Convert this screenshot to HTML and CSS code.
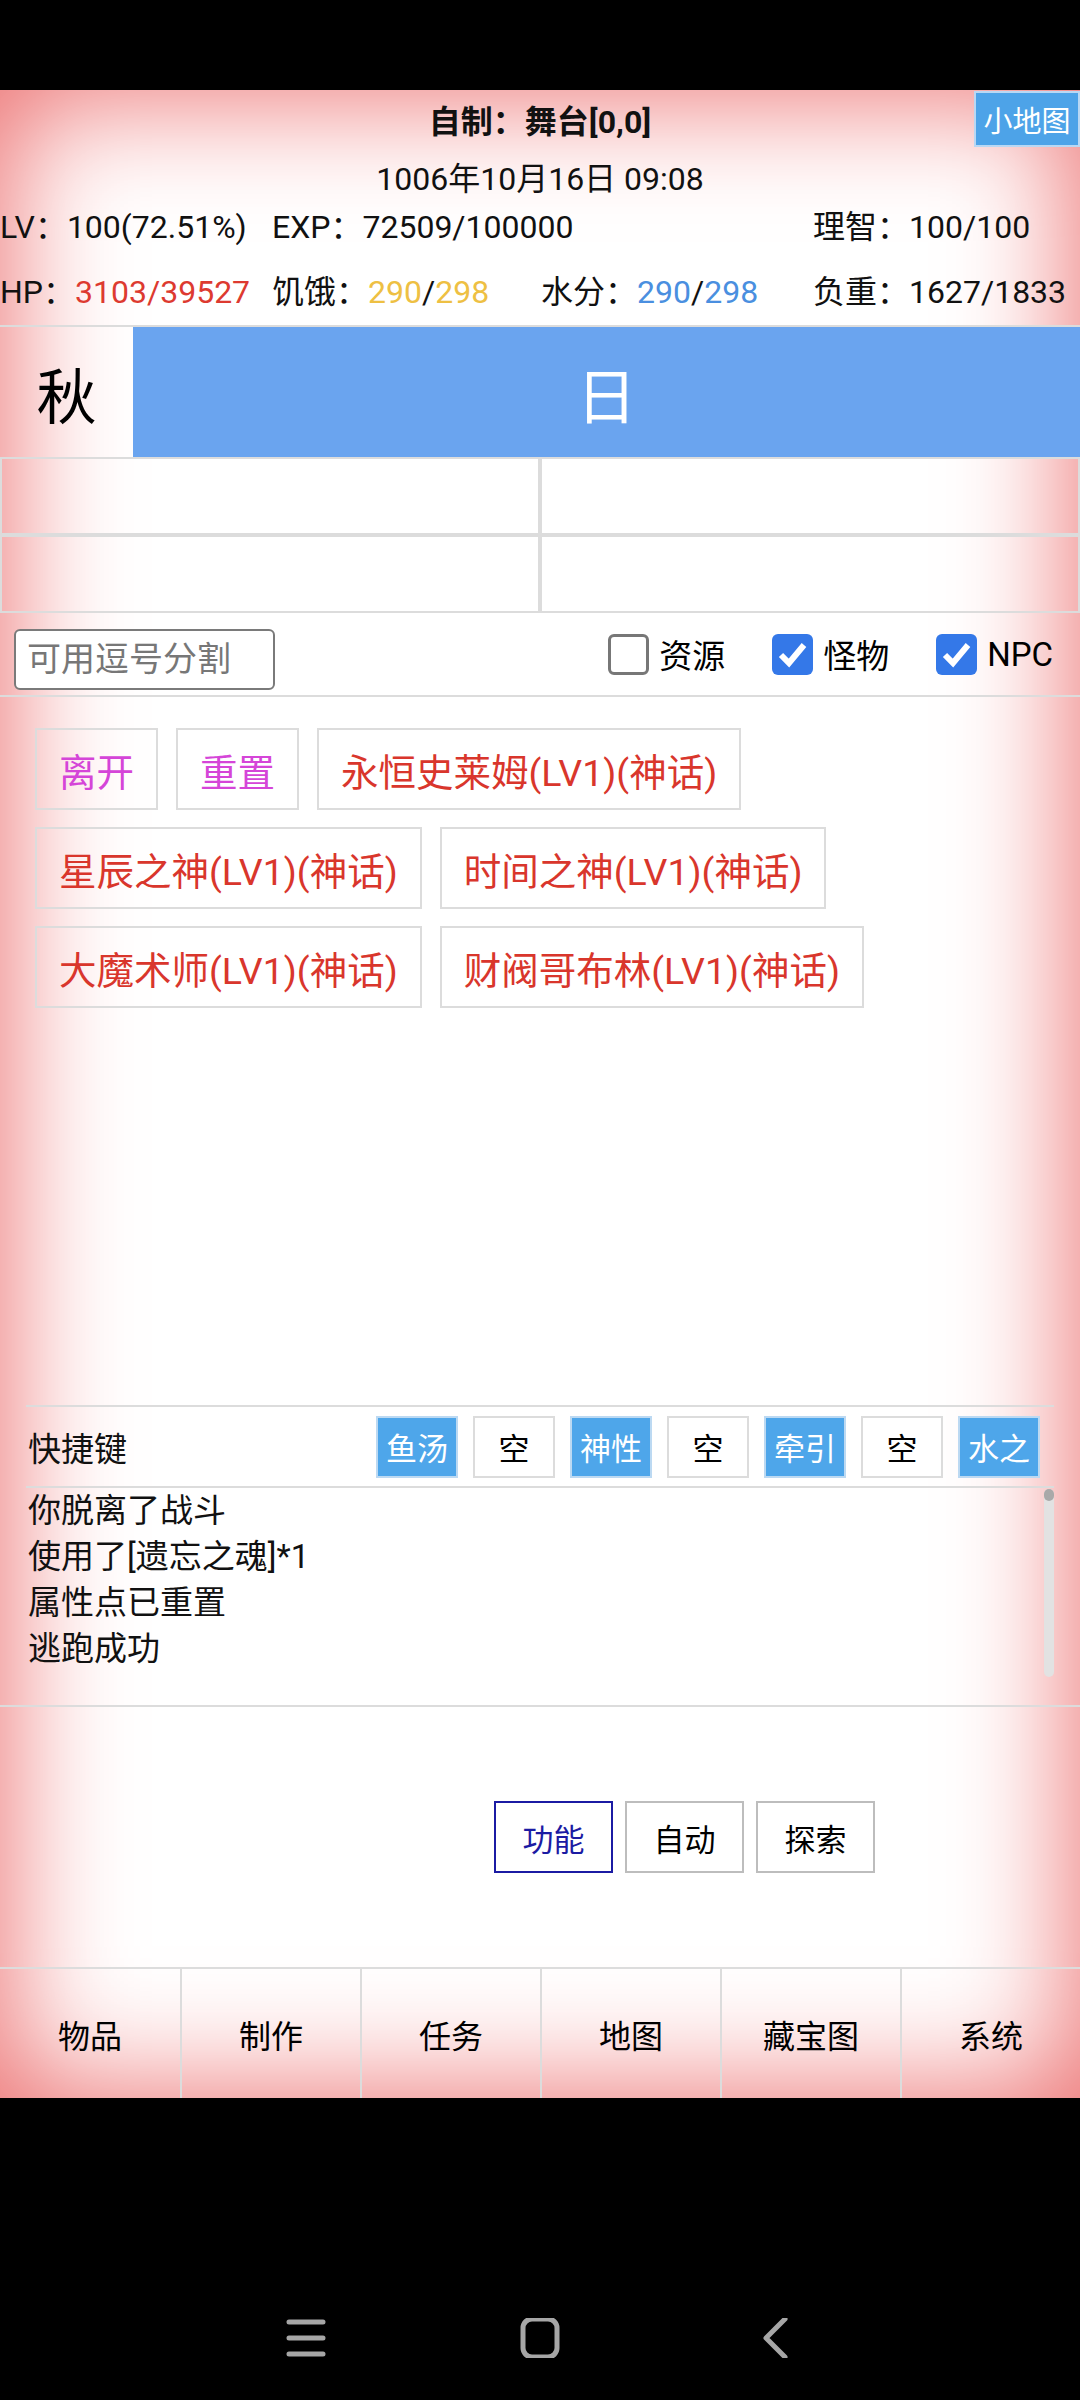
FILE: index.html
```html
<!DOCTYPE html>
<html lang="zh-CN">
<head>
    <meta charset="UTF-8">
    <meta name="viewport" content="width=device-width, initial-scale=1.0">
    <title>舞台</title>
    <link rel="stylesheet" href="styles.css">
</head>
<body>
    <div class="status-bar"></div>

    <div class="app">
        <div class="header">
            <div class="title">自制：舞台[0,0]</div>
            <button class="minimap">小地图</button>
            <div class="date">1006年10月16日 09:08</div>
            <div class="stats">
                <span>LV：100(72.51%)</span>
                <span class="span2">EXP：72509/100000</span>
                <span>理智：100/100</span>
            </div>
            <div class="stats hp-row">
                <span>HP：<em class="red">3103/39527</em></span>
                <span>饥饿：<em class="yellow">290</em>/<em class="yellow">298</em></span>
                <span>水分：<em class="blue">290</em>/<em class="blue">298</em></span>
                <span>负重：1627/1833</span>
            </div>
        </div>

        <div class="season">
            <div class="season-name">秋</div>
            <div class="season-time">日</div>
        </div>

        <div class="cells">
            <div class="cell"></div>
            <div class="cell"></div>
            <div class="cell"></div>
            <div class="cell"></div>
        </div>

        <div class="filter">
            <input class="filter-input" type="text" placeholder="可用逗号分割">
            <div class="checks">
                <label class="check"><span class="box"></span>资源</label>
                <label class="check"><span class="box on"><svg viewBox="0 0 41 41"><path d="M9 21 L17 29 L32 11" /></svg></span>怪物</label>
                <label class="check"><span class="box on"><svg viewBox="0 0 41 41"><path d="M9 21 L17 29 L32 11" /></svg></span>NPC</label>
            </div>
        </div>

        <div class="actions">
            <button class="act purple">离开</button>
            <button class="act purple">重置</button>
            <button class="act">永恒史莱姆(LV1)(神话)</button>
            <button class="act">星辰之神(LV1)(神话)</button>
            <button class="act">时间之神(LV1)(神话)</button>
            <button class="act">大魔术师(LV1)(神话)</button>
            <button class="act">财阀哥布林(LV1)(神话)</button>
        </div>

        <div class="quick">
            <span class="quick-label">快捷键</span>
            <div class="quick-keys">
                <button class="key set">鱼汤</button>
                <button class="key">空</button>
                <button class="key set">神性</button>
                <button class="key">空</button>
                <button class="key set">牵引</button>
                <button class="key">空</button>
                <button class="key set">水之</button>
            </div>
        </div>

        <div class="log">
            <div class="log-lines">
                <div>你脱离了战斗</div>
                <div>使用了[遗忘之魂]*1</div>
                <div>属性点已重置</div>
                <div>逃跑成功</div>
            </div>
            <div class="scrollbar"><div class="thumb"></div></div>
        </div>

        <div class="funcs">
            <button class="func active">功能</button>
            <button class="func">自动</button>
            <button class="func">探索</button>
        </div>

        <nav class="tabs">
            <div class="tab">物品</div>
            <div class="tab">制作</div>
            <div class="tab">任务</div>
            <div class="tab">地图</div>
            <div class="tab">藏宝图</div>
            <div class="tab">系统</div>
        </nav>
    </div>

    <div class="system-nav">
        <svg class="sys-icon" viewBox="0 0 40 40"><path d="M3 4 H37 M3 20 H37 M3 36 H37" /></svg>
        <svg class="sys-icon" viewBox="0 0 40 40"><rect x="3" y="1" width="34" height="38" rx="9" /></svg>
        <svg class="sys-icon" viewBox="0 0 40 40"><path d="M31 1 L12 20 L31 39" /></svg>
    </div>
</body>
</html>
```

FILE: styles.css
```css
* {
    box-sizing: border-box;
}
body {
    margin: 0;
    background: #000;
    font-family: Roboto, "Noto Sans CJK SC", sans-serif;
    color: #111;
}
button {
    font-family: inherit;
}
.status-bar {
    height: 90px;
}
.app {
    position: relative;
    height: 2008px;
    background: #fff;
    box-shadow: inset 0 0 120px 8px #ec7070;
    display: flex;
    flex-direction: column;
}

/* header */
.header {
    height: 235px;
    font-size: 32px;
}
.title {
    height: 64px;
    line-height: 64px;
    text-align: center;
    font-weight: bold;
}
.minimap {
    position: absolute;
    top: 1px;
    right: 0;
    width: 106px;
    height: 56px;
    padding: 0;
    border: 2px solid #b9d8f4;
    background: #4da3e8;
    color: #fff;
    font-size: 29px;
}
.date {
    height: 50px;
    line-height: 50px;
    text-align: center;
}
.stats {
    display: grid;
    grid-template-columns: 272px 269px 272px 1fr;
    height: 46px;
    line-height: 46px;
    white-space: nowrap;
}
.stats .span2 {
    grid-column: span 2;
}
.stats em {
    font-style: normal;
}
.hp-row {
    height: 75px;
    line-height: 50px;
    padding-top: 17px;
}
.red { color: #dd3a30; }
.yellow { color: #eec043; }
.blue { color: #4a8fe0; }

/* season */
.season {
    display: flex;
    height: 132px;
    border-top: 2px solid #dcdcdc;
}
.season-name {
    width: 133px;
    display: flex;
    align-items: center;
    justify-content: center;
    font-size: 60px;
    color: #000;
}
.season-time {
    flex: 1;
    display: flex;
    align-items: center;
    justify-content: center;
    background: #6aa4ef;
    color: #fff;
    font-size: 60px;
}

/* empty cells */
.cells {
    display: grid;
    grid-template-columns: 1fr 1fr;
}
.cell {
    height: 78px;
    border: 2px solid #dcdcdc;
}

/* filter */
.filter {
    height: 84px;
    display: flex;
    align-items: center;
    justify-content: space-between;
    padding: 0 27px 0 14px;
    border-bottom: 2px solid #dcdcdc;
}
.filter-input {
    width: 261px;
    height: 61px;
    margin-top: 10px;
    padding: 0 11px;
    border: 2px solid #7a7a7a;
    border-radius: 6px;
    background: #fff;
    font-family: inherit;
    font-size: 34px;
}
.filter-input::placeholder {
    color: #777;
}
.checks {
    display: flex;
    gap: 47px;
}
.check {
    display: flex;
    align-items: center;
    gap: 10px;
    font-size: 33px;
    color: #000;
}
.box {
    width: 41px;
    height: 41px;
    border: 3px solid #777;
    border-radius: 6px;
    background: #fff;
}
.box.on {
    border: none;
    background: #3478e8;
}
.box svg {
    display: block;
    width: 41px;
    height: 41px;
    fill: none;
    stroke: #fff;
    stroke-width: 6;
}

/* monsters */
.actions {
    flex: 1;
    display: flex;
    flex-wrap: wrap;
    align-content: flex-start;
    gap: 17px 18px;
    padding: 31px 35px 0;
}
.act {
    height: 82px;
    padding: 0 22px;
    border: 2px solid #dcdcdc;
    background: transparent;
    color: #d9362c;
    font-size: 37.5px;
}
.act.purple {
    color: #d545d8;
}

/* quick keys */
.quick {
    height: 81px;
    margin: 0 26px;
    border-top: 2px solid #dcdcdc;
    display: flex;
    align-items: center;
    justify-content: space-between;
    padding-right: 14px;
    font-size: 33px;
}
.quick-label {
    padding-left: 2px;
}
.quick-keys {
    display: flex;
    gap: 15px;
}
.key {
    width: 82px;
    height: 62px;
    padding: 0;
    border: 2px solid #dcdcdc;
    background: #fff;
    color: #000;
    font-size: 31px;
    overflow: hidden;
    white-space: nowrap;
}
.key.set {
    background: #4ea6ea;
    border-color: #bcd9f2;
    color: #fff;
}

/* log */
.log {
    height: 219px;
    margin: 0 26px;
    border-top: 2px solid #dcdcdc;
    display: flex;
    justify-content: space-between;
    font-size: 33px;
    color: #111;
}
.log-lines {
    line-height: 46px;
    padding-left: 2px;
}
.scrollbar {
    width: 10px;
    margin-top: 1px;
    height: 188px;
    border-radius: 5px;
    background: #e2e2e2;
}
.thumb {
    height: 12px;
    border-radius: 5px;
    background: #a9a9a9;
}

/* function buttons */
.funcs {
    height: 262px;
    border-top: 2px solid #dcdcdc;
    display: flex;
    align-items: center;
    justify-content: flex-end;
    gap: 12px;
    padding-right: 205px;
}
.func {
    width: 119px;
    height: 72px;
    padding: 0;
    border: 2px solid #bdbdbd;
    background: #fff;
    color: #000;
    font-size: 31px;
}
.func.active {
    border-color: #1b1ba3;
    color: #1b1ba3;
}

/* bottom tabs */
.tabs {
    height: 131px;
    border-top: 2px solid #dcdcdc;
    display: grid;
    grid-template-columns: repeat(6, 1fr);
}
.tab {
    display: flex;
    align-items: center;
    justify-content: center;
    border-left: 2px solid #dcdcdc;
    font-size: 32px;
    color: #000;
}
.tab:first-child {
    border-left: none;
}

/* android navigation */
.system-nav {
    height: 302px;
    display: flex;
    justify-content: center;
    gap: 194px;
    padding-top: 220px;
}
.sys-icon {
    width: 40px;
    height: 40px;
    fill: none;
    stroke: #a6a6a6;
    stroke-width: 5;
    stroke-linecap: round;
    stroke-linejoin: round;
}
```
